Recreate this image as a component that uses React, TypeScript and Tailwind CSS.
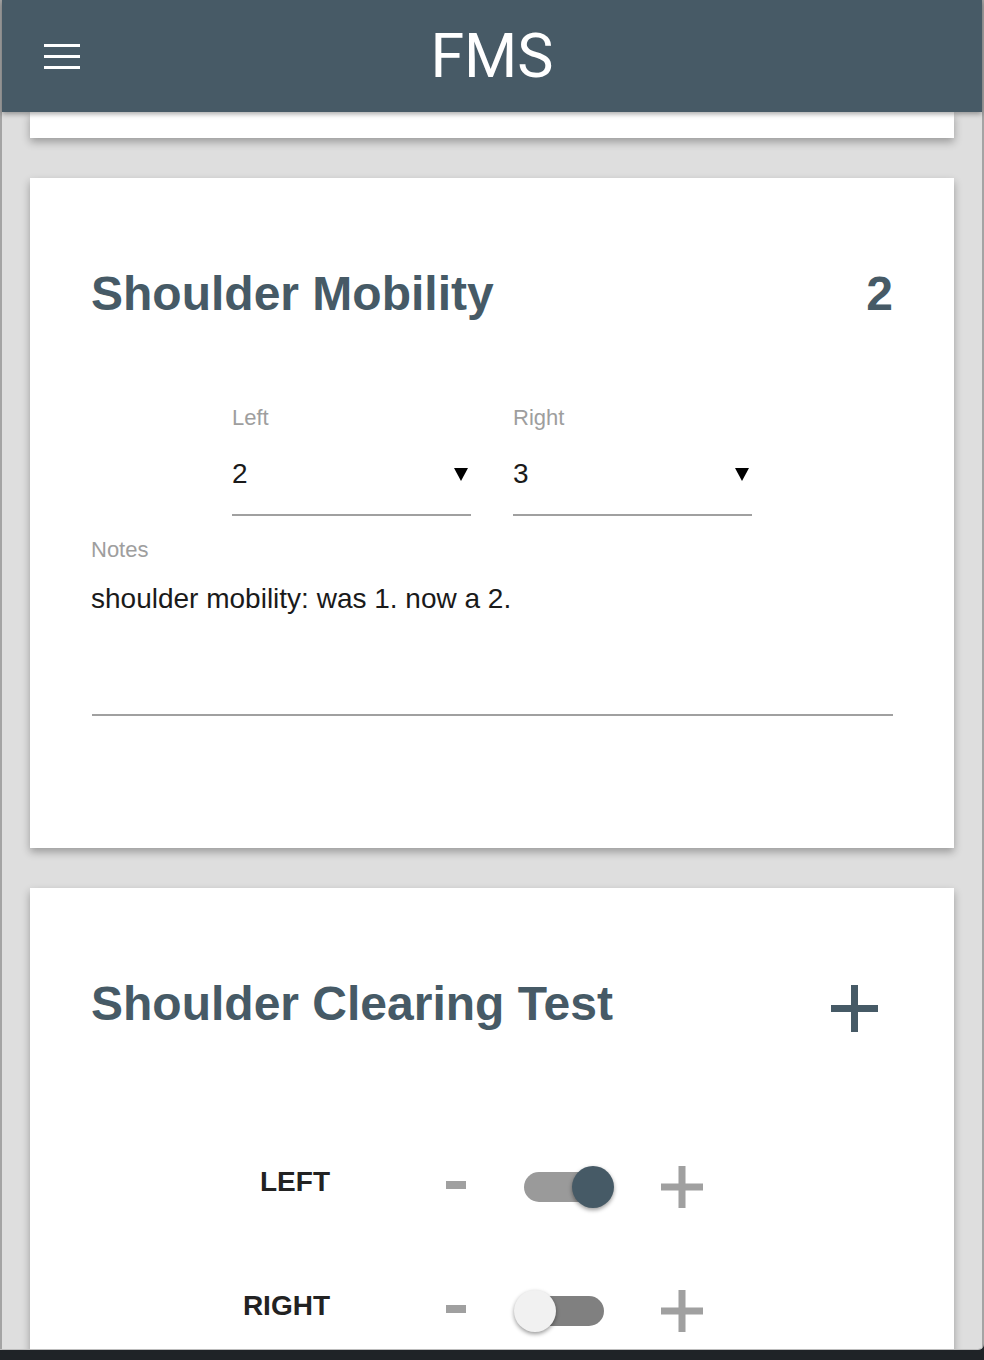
import React from "react";

const slate = "text-[#465a66]";

const SelectField = ({ label, value }: { label: string; value: string }) => (
  <div className="w-[239px]">
    <div className="text-[22px] leading-none text-[#9e9e9e]">{label}</div>
    <div className="mt-[31px] flex items-center justify-between pr-[3px]">
      <span className="text-[28px] leading-none text-[#1a1a1a]">{value}</span>
      <svg width="14" height="13" viewBox="0 0 14 13">
        <polygon points="0,0 14,0 7,13" fill="#000" />
      </svg>
    </div>
    <div className="mt-[26px] h-[2px] bg-[#a0a0a0]" />
  </div>
);

const Plus = ({ size, stroke, color }: { size: number; stroke: number; color: string }) => (
  <svg width={size} height={size} viewBox={`0 0 ${size} ${size}`}>
    <rect x={(size - stroke) / 2} y={0} width={stroke} height={size} fill={color} />
    <rect x={0} y={(size - stroke) / 2} width={size} height={stroke} fill={color} />
  </svg>
);

const Toggle = ({ on }: { on: boolean }) => (
  <div className="relative h-[42px] w-[100px]">
    <div
      className={`absolute left-[10px] right-[10px] top-[6px] h-[30px] rounded-full ${
        on ? "bg-[#9a9a9a]" : "bg-[#808080]"
      }`}
    />
    <div
      className={`absolute top-0 h-[42px] w-[42px] rounded-full shadow-[0_2px_4px_rgba(0,0,0,0.4)] ${
        on ? "right-0 bg-[#465a66]" : "left-0 bg-[#f1f1f1]"
      }`}
    />
  </div>
);

const SideRow = ({ label, on }: { label: string; on: boolean }) => (
  <div className="flex h-[42px] items-center">
    <div className="mb-[10px] w-[239px] text-right text-[28px] font-bold leading-none text-[#222]">{label}</div>
    <div className="mb-[4px] ml-[116px] h-[8px] w-[20px] bg-[#a0a0a0]" />
    <div className="ml-[48px]">
      <Toggle on={on} />
    </div>
    <div className="ml-[47px]">
      <Plus size={42} stroke={7} color="#a0a0a0" />
    </div>
  </div>
);

export default function App() {
  return (
    <div
      className="flex h-[1360px] flex-col overflow-hidden bg-[#1f2327]"
      style={{ fontFamily: '"Liberation Sans", Arial, sans-serif' }}
    >
      <div className="h-[1350px] overflow-hidden rounded-br-[6px] border-b border-[#bdbdbd] bg-[#a4a4a4] px-[2px]">
        <div className="flex h-full flex-col bg-[#dedede]">
          {/* toolbar */}
          <header className="relative z-10 grid h-[112px] shrink-0 grid-cols-[1fr_auto_1fr] items-center bg-[#475a66] shadow-[0_2px_5px_rgba(0,0,0,0.35)]">
            <div className="pl-[42px]">
              <div className="flex w-[36px] flex-col gap-[8px]">
                <div className="h-[3px] bg-white" />
                <div className="h-[3px] bg-white" />
                <div className="h-[3px] bg-white" />
              </div>
            </div>
            <div
              className="text-[61px] leading-none text-white"
              style={{ fontFamily: "Roboto, Arial, sans-serif" }}
            >
              FMS
            </div>
            <div />
          </header>

          <main className="flex flex-col gap-[40px] px-[28px]">
            <div className="h-[26px] bg-white shadow-[0_4px_8px_rgba(0,0,0,0.3)]" />

            <section className="h-[670px] bg-white px-[61px] pt-[92px] shadow-[0_4px_8px_rgba(0,0,0,0.3)]">
              <div className={`flex items-start justify-between text-[48px] font-bold leading-none ${slate}`}>
                <h2>Shoulder Mobility</h2>
                <span>2</span>
              </div>
              <div className="mt-[89px] flex justify-center gap-[42px]">
                <SelectField label="Left" value="2" />
                <SelectField label="Right" value="3" />
              </div>
              <div className="mt-[23px] text-[22px] leading-none text-[#9e9e9e]">Notes</div>
              <div className="mt-[24px] text-[28px] leading-none text-[#1a1a1a]">
                shoulder mobility: was 1. now a 2.
              </div>
              <div className="ml-[1px] mt-[101px] h-[2px] bg-[#a0a0a0]" />
            </section>

            <section className="h-[600px] bg-white px-[61px] pt-[92px] shadow-[0_4px_8px_rgba(0,0,0,0.3)]">
              <div className="flex items-start justify-between">
                <h2 className={`text-[48px] font-bold leading-none ${slate}`}>Shoulder Clearing Test</h2>
                <div className="mr-[15px] mt-[5px]">
                  <Plus size={47} stroke={7} color="#465a66" />
                </div>
              </div>
              <div className="mt-[134px] flex flex-col gap-[82px]">
                <SideRow label="LEFT" on={true} />
                <SideRow label="RIGHT" on={false} />
              </div>
            </section>
          </main>
        </div>
      </div>
    </div>
  );
}
